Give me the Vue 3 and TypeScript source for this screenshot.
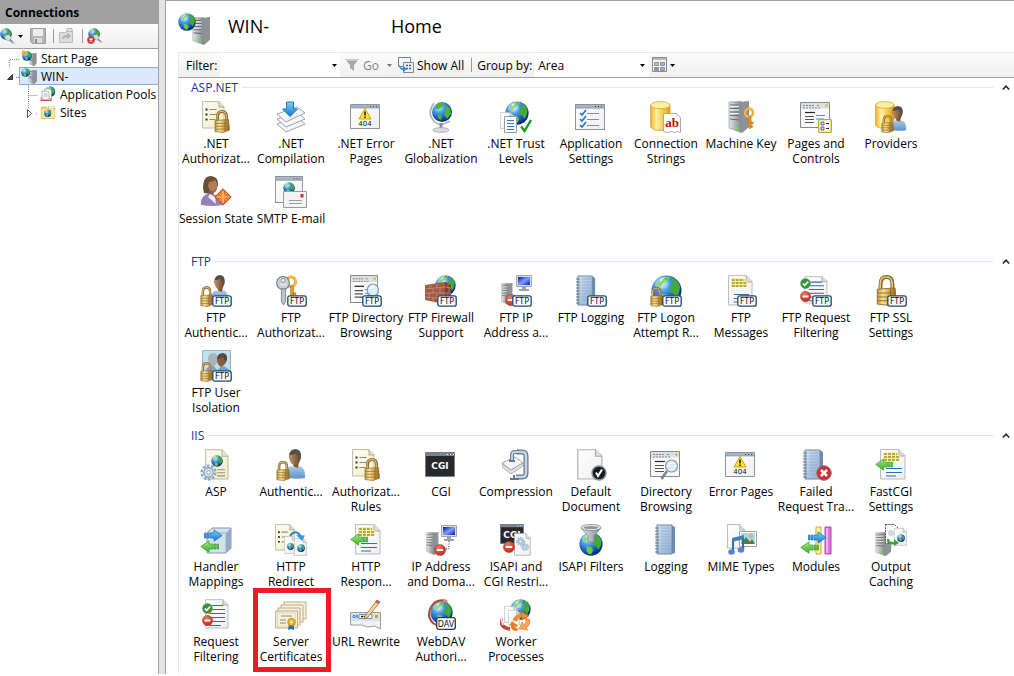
<script setup lang="ts">
import { h, ref } from 'vue'

// A part of an icon: symbol id, x, y, width, height on a 32 unit canvas
type Part = [string, number, number, number, number]
interface Feature { icon: string; lines: string[]; marked?: boolean }
interface Area { name: string; items: Feature[] }
interface Lettering { text: string; size: number; drop: number; fill: string; family: string; weight: number }

// Words that some parts carry, centred in the part; drop is the baseline's share of its height
const letterings: Record<string, Lettering> = {
  'p-ftp': { text: 'FTP', size: 8, drop: 0.76, fill: '#111', family: 'DejaVu Sans', weight: 400 },
  'p-dav': { text: 'DAV', size: 8, drop: 0.75, fill: '#111', family: 'DejaVu Sans', weight: 400 },
  'p-404': { text: '404', size: 7, drop: 0.95, fill: '#111', family: 'DejaVu Sans', weight: 400 },
  'p-cgi': { text: 'CGI', size: 9, drop: 0.68, fill: '#fff', family: 'DejaVu Sans', weight: 700 },
  'p-ab': { text: 'ab', size: 13, drop: 0.7, fill: '#b01616', family: 'Liberation Serif', weight: 700 },
}

const ftp: Part = ['p-ftp', 12, 20, 20, 12]

const icons: Record<string, Part[]> = {
  rules: [['p-rules', 2, 0, 24, 28], ['p-lock', 14, 9, 16, 23]],
  compile: [['p-stack', 1, 0, 30, 32]],
  error: [['p-window', 0, 3, 30, 25], ['p-404', 6, 6, 18, 20]],
  globalization: [['p-stand', 2, 0, 28, 32]],
  trust: [['p-globe', 5, 0, 24, 24], ['p-doc', 0, 11, 14, 17], ['p-bluedoc', 4, 15, 13, 17], ['p-tick', 20, 18, 12, 14]],
  settings: [['p-window', 0, 3, 30, 26], ['p-checks', 4, 8, 22, 19]],
  connection: [['p-db', 0, 0, 21, 30], ['p-ab', 13, 12, 18, 20]],
  machine: [['p-server', 3, 0, 22, 32], ['p-goldkey', 18, 6, 13, 23]],
  pages: [['p-browser', 0, 1, 30, 26], ['p-controls', 18, 18, 14, 14]],
  providers: [['p-db', 0, 0, 20, 28], ['p-user', 13, 5, 19, 25], ['p-lock', 6, 14, 13, 18]],
  session: [['p-purple', 0, 0, 24, 30], ['p-diamond', 14, 12, 18, 18]],
  smtp: [['p-window', 0, 0, 28, 27], ['p-globe', 8, 6, 12, 12], ['p-mail', 8, 15, 24, 17]],
  ftpAuth: [['p-user', 10, 0, 19, 27], ['p-lock', 0, 11, 13, 21], ftp],
  ftpRules: [['p-goldkey', 9, 0, 15, 27], ['p-key', 0, 1, 16, 30], ftp],
  ftpBrowse: [['p-browser', 0, 0, 28, 28], ['p-lens', 12, 8, 18, 21], ftp],
  ftpFirewall: [['p-globe', 10, 0, 21, 21], ['p-bricks', 0, 7, 26, 22], ftp],
  ftpIp: [['p-server', 1, 8, 12, 22], ['p-monitor', 16, 0, 16, 17], ['p-minus', 5, 19, 12, 12], ftp],
  ftpLog: [['p-book', 0, 0, 23, 31], ftp],
  ftpLogon: [['p-globe', 1, 0, 31, 31], ['p-lock', 0, 12, 13, 20], ftp],
  ftpMessages: [['p-message', 3, 0, 25, 31], ftp],
  ftpFilter: [['p-linedoc', 4, 1, 24, 28], ['p-ok', 0, 3, 11, 11], ['p-minus', 0, 16, 11, 11], ftp],
  ftpSsl: [['p-lock', 1, 0, 21, 31], ftp],
  ftpUser: [['p-frame', 2, 0, 29, 27], ['p-lock', 0, 12, 13, 20], ftp],
  asp: [['p-yellowdoc', 5, 0, 24, 31], ['p-globe', 11, 6, 12, 12], ['p-gear', 0, 15, 17, 17]],
  auth: [['p-user', 9, 0, 22, 30], ['p-lock', 1, 12, 14, 20]],
  cgi: [['p-cgi', 0, 3, 30, 25]],
  compression: [['p-clamp', 2, 0, 27, 32]],
  document: [['p-doc', 2, 0, 26, 31], ['p-blackok', 16, 16, 16, 16]],
  browse: [['p-browser', 0, 2, 30, 26], ['p-lens', 10, 10, 19, 21]],
  failed: [['p-book', 2, 0, 24, 31], ['p-redx', 16, 16, 16, 16]],
  fastcgi: [['p-message', 5, 0, 26, 31], ['p-left', 0, 9, 20, 13]],
  handler: [['p-cube', 6, 3, 26, 27], ['p-right', 2, 5, 21, 13], ['p-left', 0, 16, 21, 13]],
  redirect: [['p-rules', 0, 0, 21, 27], ['p-doc', 9, 12, 12, 18], ['p-doc', 19, 14, 13, 18], ['p-globe', 12, 19, 7, 7], ['p-globe', 22, 20, 8, 8], ['p-curve', 14, 7, 16, 10]],
  ip: [['p-server', 1, 8, 13, 23], ['p-monitor', 16, 1, 16, 17], ['p-minus', 9, 20, 12, 12], ['p-dots', 16, 17, 10, 10]],
  isapiCgi: [['p-cgi', 0, 0, 24, 20], ['p-doc', 14, 9, 17, 23], ['p-gear', 16, 13, 9, 9], ['p-gear', 21, 19, 8, 8], ['p-minus', 3, 17, 12, 12]],
  isapi: [['p-globe', 4, 8, 24, 24], ['p-funnel', 4, 0, 24, 19]],
  log: [['p-book', 4, 0, 24, 31]],
  mime: [['p-doc', 2, 0, 18, 25], ['p-picture', 14, 7, 18, 16], ['p-note', 3, 11, 17, 21]],
  modules: [['p-modules', 15, 2, 17, 29], ['p-right', 6, 7, 21, 13], ['p-left', 0, 17, 21, 13]],
  output: [['p-server', 0, 8, 17, 24], ['p-ghost', 10, 0, 14, 20], ['p-doc', 19, 4, 13, 18], ['p-globe', 22, 10, 8, 8], ['p-swoop', 12, 14, 12, 8]],
  filter: [['p-linedoc', 5, 0, 24, 30], ['p-ok', 2, 4, 11, 11], ['p-minus', 2, 16, 11, 11]],
  certificates: [['p-certs', 0, 2, 32, 29]],
  rewrite: [['p-rewrite', 0, 0, 32, 32]],
  webdav: [['p-globe', 5, 2, 23, 23], ['p-ring', 2, 0, 24, 30], ['p-dav', 11, 18, 20, 13]],
  worker: [['p-globe', 10, 0, 21, 21], ['p-doc', 4, 7, 14, 17], ['p-doc', 8, 11, 12, 15], ['p-cycle', 0, 12, 32, 20]],
  host: [['p-server', 14, 4, 19, 28], ['p-globe', 0, 0, 18, 18]],
  start: [['p-server', 16, 6, 16, 26], ['p-globe', 2, 2, 20, 20], ['p-star', 0, 0, 12, 12]],
  pools: [['p-globe', 9, 0, 22, 22], ['p-sheets', 1, 5, 24, 26]],
  sites: [['p-folder', 1, 3, 30, 27], ['p-globe', 8, 11, 15, 15]],
  connect: [['p-globe', 0, 0, 24, 24], ['p-plug', 9, 12, 22, 20]],
  disconnect: [['p-globe', 2, 0, 24, 24], ['p-plug', 12, 12, 20, 18], ['p-redx', 0, 16, 16, 16]],
}

const Glyph = (props: { name: string }) =>
  h('svg', { viewBox: '0 0 32 32', 'aria-hidden': 'true' }, icons[props.name].flatMap(([id, x, y, width, height]) => {
    const word = letterings[id]
    const shape = h('use', { href: '#' + id, x, y, width, height })
    if (!word) return [shape]
    return [shape, h('text', {
      x: x + width / 2, y: y + height * word.drop, fill: word.fill,
      'text-anchor': 'middle', 'font-family': word.family, 'font-size': word.size, 'font-weight': word.weight,
    }, word.text)]
  }))
Glyph.props = ['name']

const f = (icon: string, label: string, marked = false): Feature => ({ icon, lines: label.split('|'), marked })

const areas: Area[] = [
  {
    name: 'ASP.NET',
    items: [
      f('rules', '.NET|Authorizat...'), f('compile', '.NET|Compilation'), f('error', '.NET Error|Pages'),
      f('globalization', '.NET|Globalization'), f('trust', '.NET Trust|Levels'), f('settings', 'Application|Settings'),
      f('connection', 'Connection|Strings'), f('machine', 'Machine Key'), f('pages', 'Pages and|Controls'),
      f('providers', 'Providers'), f('session', 'Session State'), f('smtp', 'SMTP E-mail'),
    ],
  },
  {
    name: 'FTP',
    items: [
      f('ftpAuth', 'FTP|Authentic...'), f('ftpRules', 'FTP|Authorizat...'), f('ftpBrowse', 'FTP Directory|Browsing'),
      f('ftpFirewall', 'FTP Firewall|Support'), f('ftpIp', 'FTP IP|Address a...'), f('ftpLog', 'FTP Logging'),
      f('ftpLogon', 'FTP Logon|Attempt R...'), f('ftpMessages', 'FTP|Messages'), f('ftpFilter', 'FTP Request|Filtering'),
      f('ftpSsl', 'FTP SSL|Settings'), f('ftpUser', 'FTP User|Isolation'),
    ],
  },
  {
    name: 'IIS',
    items: [
      f('asp', 'ASP'), f('auth', 'Authentic...'), f('rules', 'Authorizat...|Rules'), f('cgi', 'CGI'),
      f('compression', 'Compression'), f('document', 'Default|Document'), f('browse', 'Directory|Browsing'),
      f('error', 'Error Pages'), f('failed', 'Failed|Request Tra...'), f('fastcgi', 'FastCGI|Settings'),
      f('handler', 'Handler|Mappings'), f('redirect', 'HTTP|Redirect'), f('fastcgi', 'HTTP|Respon...'),
      f('ip', 'IP Address|and Doma...'), f('isapiCgi', 'ISAPI and|CGI Restri...'), f('isapi', 'ISAPI Filters'),
      f('log', 'Logging'), f('mime', 'MIME Types'), f('modules', 'Modules'), f('output', 'Output|Caching'),
      f('filter', 'Request|Filtering'), f('certificates', 'Server|Certificates', true), f('rewrite', 'URL Rewrite'),
      f('webdav', 'WebDAV|Authori...'), f('worker', 'Worker|Processes'),
    ],
  },
]

const collapsed = ref<Record<string, boolean>>({})
const toggle = (name: string) => { collapsed.value[name] = !collapsed.value[name] }
const filterText = ref('')
const groupBy = ref('Area')
</script>

<template>
  <svg class="defs" aria-hidden="true">
    <defs>
      <radialGradient id="g-sea" cx=".35" cy=".28" r=".75"><stop offset="0" stop-color="#c4ecff" /><stop offset=".35" stop-color="#4b9bea" /><stop offset=".75" stop-color="#1450b8" /><stop offset="1" stop-color="#07246e" /></radialGradient>
      <linearGradient id="g-gold" x1="0" x2="1"><stop offset="0" stop-color="#c39a3f" /><stop offset=".3" stop-color="#f7e2a0" /><stop offset=".65" stop-color="#d0a248" /><stop offset="1" stop-color="#8c6424" /></linearGradient>
      <linearGradient id="g-db" x1="0" x2="1"><stop offset="0" stop-color="#f3b52c" /><stop offset=".3" stop-color="#fff0a4" /><stop offset=".7" stop-color="#f5c33d" /><stop offset="1" stop-color="#dd981d" /></linearGradient>
      <linearGradient id="g-steel" x1="0" x2="1"><stop offset="0" stop-color="#e3e6e8" /><stop offset=".5" stop-color="#b3b8bc" /><stop offset="1" stop-color="#83888c" /></linearGradient>
      <linearGradient id="g-page" x1="0" y1="0" x2="1" y2="1"><stop offset="0" stop-color="#fff" /><stop offset="1" stop-color="#efefef" /></linearGradient>
      <linearGradient id="g-cream" x1="0" y1="0" x2="1" y2="1"><stop offset="0" stop-color="#fffef2" /><stop offset="1" stop-color="#f3ebc4" /></linearGradient>
      <linearGradient id="g-body" x1="0" y1="0" x2="0" y2="1"><stop offset="0" stop-color="#a8cbea" /><stop offset="1" stop-color="#5f94c6" /></linearGradient>
      <linearGradient id="g-book" x1="0" x2="1" y2="1"><stop offset="0" stop-color="#d0e0f2" /><stop offset="1" stop-color="#8fadd0" /></linearGradient>
      <linearGradient id="g-blue" x1="0" y1="0" x2="0" y2="1"><stop offset="0" stop-color="#7fd1ff" /><stop offset="1" stop-color="#1478cc" /></linearGradient>
      <linearGradient id="g-green" x1="0" y1="0" x2="0" y2="1"><stop offset="0" stop-color="#a4ea80" /><stop offset="1" stop-color="#39b02a" /></linearGradient>
      <linearGradient id="g-screen" x1="0" y1="0" x2="1" y2="1"><stop offset="0" stop-color="#0614a0" /><stop offset=".5" stop-color="#7fa0f4" /><stop offset="1" stop-color="#0a1cb4" /></linearGradient>
      <linearGradient id="g-skin" x1="0" x2="1"><stop offset="0" stop-color="#c4946a" /><stop offset="1" stop-color="#6d452a" /></linearGradient>
      <radialGradient id="g-red" cx=".4" cy=".3" r=".8"><stop offset="0" stop-color="#ee7a66" /><stop offset="1" stop-color="#bb1e10" /></radialGradient>
    </defs>
    <symbol id="p-globe" viewBox="0 0 32 32">
      <circle cx="16" cy="16" r="15.5" fill="url(#g-sea)" />
      <path d="M13 2l7 0-2 4-5 2-4 5-4-1q2-7 8-10z" fill="#6cc552" /><path d="M21 3q7 2 9 9l-1 6-3 6-3-5-4-2 1-6 4-1-3-3z" fill="#44ab32" /><path d="M10 19l6 1 3 4-3 6q-5-1-6-5z" fill="#6ec944" /><path d="M9 4q3-2 6-2l-3 3-3 3z" fill="#d4f3b6" /><ellipse cx="11" cy="9" rx="7" ry="5" fill="#fff" opacity=".25" />
    </symbol>
    <symbol id="p-lock" viewBox="0 0 16 24" preserveAspectRatio="none">
      <path d="M3.5 13V7q0-5.500 4.500-5.500T12.500 7v6" fill="none" stroke="#8e6d2c" stroke-width="3" /><path d="M3.200 12V7q0-5.500 4.500-5.500T12.300 7v4" fill="none" stroke="#e9d28d" stroke-width="1" />
      <path d="M1 11l13.500-1 1 11L9 23.500 1 22.500z" fill="url(#g-gold)" stroke="#8d6828" stroke-width=".7" /><path d="M1 14h13M1 17h14M1 20h14" stroke="#9b7027" stroke-width=".8" /><path d="M11 10.500v12.500" stroke="#80591d" stroke-width=".6" />
    </symbol>
    <symbol id="p-doc" viewBox="0 0 24 30" preserveAspectRatio="none"><path d="M.7.7H17l6 6V29H.7z" fill="url(#g-page)" stroke="#aeb0b2" stroke-width="1.100" /><path d="M17 .7V7h6" fill="#dedede" stroke="#a4a6a8" /></symbol>
    <symbol id="p-yellowdoc" viewBox="0 0 24 30" preserveAspectRatio="none"><path d="M.7.7H17l6 6V29H.7z" fill="url(#g-cream)" stroke="#bdb9a4" /><path d="M17 .7V7h6" fill="#ece6cb" stroke="#b3af9b" /><path d="M12 20h8M12 23h8M12 26h8" stroke="#969382" /></symbol>
    <symbol id="p-rules" viewBox="0 0 24 28" preserveAspectRatio="none"><path d="M.6.6H17l5 5V27H.6z" fill="url(#g-cream)" stroke="#c0bba5" /><path d="M17 .6V6h5" fill="#e8e3ce" stroke="#aaa797" /><path d="M3.500 8.500h2M3.500 13.500h2M3.500 18.500h2" stroke="#2c3550" stroke-width="2" /><path d="M7.500 8.500h7M7.500 13.500h7M7.500 18.500h6" stroke="#888b94" stroke-width="1.200" /></symbol>
    <symbol id="p-bluedoc" viewBox="0 0 13 17"><path d="M.5.500h12v16H.5z" fill="#fff" stroke="#919da9" /><path d="M3 4.500h7M3 7.500h7M3 10.500h7M3 13.500h7" stroke="#3777ba" /></symbol>
    <symbol id="p-linedoc" viewBox="0 0 24 30" preserveAspectRatio="none"><path d="M.7.7H18l5 5V29H.7z" fill="url(#g-page)" stroke="#b7bdc5" /><path d="M18 .7V6h5" fill="#ddd" stroke="#aaa" /><path d="M5 6.500h13M5 10.500h15M5 14.500h15M5 18.500h15M5 22.500h15M5 26.500h11" stroke="#286db2" stroke-width="1.200" /></symbol>
    <symbol id="p-message" viewBox="0 0 26 31" preserveAspectRatio="none"><path d="M.6.6H19l6 6V30H.6z" fill="url(#g-page)" stroke="#b6babd" /><path d="M19 .6V7h6" fill="#ddd" stroke="#aaa" /><path d="M3 3h15v3h2v6H3z" fill="#fff391" /><path d="M4 5h13M4 8h15M4 11h15" stroke="#655c23" stroke-width="1.200" stroke-dasharray="3 1" /><path d="M6 19.500h16M6 23.500h16M6 27h10" stroke="#2970ba" stroke-width="1.200" /></symbol>
    <symbol id="p-stack" viewBox="0 0 30 32"><g fill="#f5f6f7" stroke="#94989c" stroke-width=".9"><path d="M1 23l20-7 8 7-19 8z" /><path d="M1 18l20-7 8 7-19 8z" /><path d="M1 13l20-7 8 6-19 9z" /></g><path d="M10.500 1h7v7h4L14 15.500 6.500 8h4z" fill="url(#g-blue)" stroke="#1b77b8" /></symbol>
    <symbol id="p-window" viewBox="0 0 30 25" preserveAspectRatio="none"><path d="M.5.500h29v24H.5z" fill="url(#g-page)" stroke="#8b939c" /><path d="M1 1h28v3H1z" fill="#a6b3c2" /><path d="M20 2.500h1m2 0h1m2 0h1" stroke="#30455f" /><path d="M1 4h28" stroke="#7f8b98" stroke-width=".6" /></symbol>
    <symbol id="p-404" viewBox="0 0 18 20"><path d="M9 1.500L15 12H3z" fill="#ffe13d" stroke="#d5a300" stroke-linejoin="round" /><path d="M9 4.500v4M9 9.500v1.500" stroke="#222" stroke-width="1.600" /></symbol>
    <symbol id="p-stand" viewBox="0 0 28 32"><path d="M7 2Q0 11 6 19t17 1" fill="none" stroke="#b3b7bb" stroke-width="1.800" /><path d="M14 22v6" stroke="#8f9397" stroke-width="3" /><ellipse cx="14" cy="29" rx="8" ry="2.400" fill="#d8dadc" stroke="#919599" stroke-width=".6" /><circle cx="15" cy="11" r="10" fill="url(#g-sea)" /><path d="M9 4q4-4 8-2l-1 3-4 3-4 0zM18 4l5 3 1 6-4 5-3-5 2-3zM11 13l4 1-1 5-3-2z" fill="#4db536" /></symbol>
    <symbol id="p-tick" viewBox="0 0 12 14"><path d="M1.200 7.500L4.500 12 11 1" fill="none" stroke="#1c9a20" stroke-width="2.400" /></symbol>
    <symbol id="p-checks" viewBox="0 0 22 19"><path d="M1 4l2 2 4-5M1 10l2 2 4-5M1 16l2 2 4-5" fill="none" stroke="#2774bd" stroke-width="1.600" /><path d="M8 4.500h12M8 10.500h12M8 16.500h12" stroke="#858d96" stroke-width="1.200" /></symbol>
    <symbol id="p-db" viewBox="0 0 21 30" preserveAspectRatio="none"><path d="M.7 4v22q2 3.400 9.500 3.400T20 26V4z" fill="url(#g-db)" stroke="#d69b27" stroke-width=".8" /><ellipse cx="10.400" cy="4.200" rx="9.700" ry="3.600" fill="#fff0a6" stroke="#d3a338" stroke-width=".8" /></symbol>
    <symbol id="p-ab" viewBox="0 0 18 20"><path d="M.5.500h13l4 4v15l-3-1-3 1-3-1-4 1-4-1z" fill="#fff" stroke="#aaa" /></symbol>
    <symbol id="p-server" viewBox="0 0 22 32" preserveAspectRatio="none"><path d="M11 1l10-1v26l-7 6-3-2z" fill="#8d9296" /><path d="M1 1l12-.5v31L1 27z" fill="url(#g-steel)" stroke="#8c9195" stroke-width=".6" /><path d="M2 4h9M2 7.500h9M2 11h9M2 14.500h9M2 18l9 1" stroke="#666d72" stroke-width="1.200" /><path d="M2 5.400h9M2 9h9M2 12.600h9" stroke="#f7f8f9" stroke-width=".9" /><circle cx="9" cy="27" r="1.500" fill="#5be327" /></symbol>
    <symbol id="p-goldkey" viewBox="0 0 15 26" preserveAspectRatio="none"><circle cx="7" cy="6.500" r="4.600" fill="none" stroke="#eaa121" stroke-width="3" /><circle cx="7" cy="6.500" r="5" fill="none" stroke="#ffe093" stroke-width=".7" /><path d="M6.500 11h3v12l-1.500 2-1.500-2zM9 17h3v2H9zM9 21h2v2H9z" fill="#e49a1d" stroke="#a96b11" stroke-width=".5" /></symbol>
    <symbol id="p-key" viewBox="0 0 15 28" preserveAspectRatio="none"><circle cx="7.500" cy="6.500" r="6" fill="#cbd0d5" stroke="#6f7780" /><circle cx="7.500" cy="4" r="1.700" fill="#fff" stroke="#727a82" stroke-width=".7" /><path d="M6 12h4v12l-2 3-2-3z" fill="#bcc2c9" stroke="#68727c" stroke-width=".7" /><path d="M5 8h6" stroke="#e9edf0" stroke-width="1.200" /></symbol>
    <symbol id="p-browser" viewBox="0 0 30 26" preserveAspectRatio="none"><path d="M.5.500h29v25H.5z" fill="#fafafa" stroke="#83898f" /><path d="M1 1h28v5.500H1z" fill="#dddfe1" /><path d="M3 3.500h11M17 3.500h3M3 6h17" stroke="#84898e" stroke-dasharray="2 1" /><circle cx="26.500" cy="3.500" r="1.300" fill="#dcb832" /><path d="M5 10.500h10" stroke="#282828" stroke-width="1.200" /><path d="M5 14.500h9M5 17.500h9M5 20.500h9" stroke="#555" stroke-width="1.100" /><path d="M16 13.500h9M16 17h8" stroke="#508bd1" /></symbol>
    <symbol id="p-controls" viewBox="0 0 14 14"><rect x=".7" y=".7" width="12.600" height="12.600" rx="1" fill="#fffef2" stroke="#c1a520" stroke-width="1.300" /><path d="M3 3h3v3H3zM3 8h3v3H3z" fill="#dcd4f0" stroke="#4d4191" stroke-width=".8" /><path d="M8 4.500h3M8 9.500h3" stroke="#292929" /></symbol>
    <symbol id="p-user" viewBox="0 0 22 30" preserveAspectRatio="none"><path d="M1 28q-1-8 6-11l5 2 4-2q6 3 5 12-10 2-20-1z" fill="url(#g-body)" /><path d="M8 13h7l-1 6-4-1z" fill="#7d553b" /><path d="M5 8q0-8 7-8 6 1 5 9l-2 5-8-2z" fill="#54504c" /><path d="M5 6q5 0 7-2 1 4 4 5l-2 5-4 2q-5-2-5-10z" fill="url(#g-skin)" /></symbol>
    <symbol id="p-purple" viewBox="0 0 24 30"><path d="M1 29q-1-9 8-12l4 1 7 3q3 4 2 8-8 2-21 0z" fill="#9580bd" /><path d="M10 18l5 3 1 7-8-7z" fill="#eeeaf5" /><path d="M3 12Q3 0 11 0q8 1 7 9l-2 6-4 3-8-1z" fill="#6b5038" /><path d="M9 6q4 0 6-2 3 3 2 8l-3 4-4-1-2-5z" fill="#b07d55" /><path d="M10 14l4 2-1 3-4-2z" fill="#8b6044" /></symbol>
    <symbol id="p-diamond" viewBox="0 0 18 18"><path d="M9 .8L17.200 9 9 17.200.8 9z" fill="#ee7426" stroke="#b94a10" /><path d="M9 3v12M3 9h12" stroke="#ffd2a6" stroke-width="1.200" /><path d="M5.500 5.500l7 7M12.500 5.500l-7 7" stroke="#fbb27c" stroke-width=".7" /></symbol>
    <symbol id="p-mail" viewBox="0 0 24 17"><path d="M.5.500h23v16H.5z" fill="#f3f3f4" stroke="#989c9f" /><path d="M17.500 3h3v3.500h-3z" fill="#df2e21" /><path d="M6 9.500h13M6 12.500h13" stroke="#9b9da0" /></symbol>
    <symbol id="p-ftp" viewBox="0 0 20 12"><rect x=".8" y=".8" width="18.400" height="10.400" rx="2" fill="#fafbfc" stroke="#1d496f" stroke-width="1.300" /></symbol>
    <symbol id="p-lens" viewBox="0 0 19 21" preserveAspectRatio="none"><path d="M7 12l-5.500 8" stroke="#84898f" stroke-width="2.800" /><circle cx="11.500" cy="7" r="6" fill="#d9efff" fill-opacity=".9" stroke="#8799aa" stroke-width="1.200" /><path d="M8 7q1-3 4-3" stroke="#fff" stroke-width="1.500" fill="none" /></symbol>
    <symbol id="p-bricks" viewBox="0 0 26 22" preserveAspectRatio="none"><path d="M0 3l20-3 6 3v16l-7 3L0 18z" fill="#a35a44" /><path d="M20 0l6 3v16l-6 3z" fill="#7b3d2c" /><path d="M0 7l20-2 6 1M0 11l20 0 6 0M0 15l20 2 6-2M5 3v4M12 2v4M8 7v4M15 6v5M4 11v4M12 12v5M8 16v4M15 17v4M23 2v3M24 6v4M23 11v4" stroke="#cf9a86" stroke-width=".7" fill="none" /></symbol>
    <symbol id="p-monitor" viewBox="0 0 16 17"><path d="M.5.500h15v11H.5z" fill="#dadde0" stroke="#a2a6aa" /><path d="M2 2h12v8H2z" fill="url(#g-screen)" /><path d="M6 12h4v2h3v2H3v-2h3z" fill="#9ca1a6" /></symbol>
    <symbol id="p-minus" viewBox="0 0 12 12"><circle cx="6" cy="6" r="5.600" fill="url(#g-red)" stroke="#b43d2d" stroke-width=".5" /><path d="M2.700 6h6.600" stroke="#fff" stroke-width="2" /></symbol>
    <symbol id="p-ok" viewBox="0 0 12 12"><circle cx="6" cy="6" r="5.600" fill="#37923e" stroke="#8fc795" stroke-width=".6" /><path d="M3 6l2 2 4-4" fill="none" stroke="#fff" stroke-width="1.700" /></symbol>
    <symbol id="p-blackok" viewBox="0 0 16 16"><circle cx="8" cy="8" r="7" fill="#181a1b" stroke="#8d9193" stroke-width="1.500" /><path d="M5 7.500L7 11l4-6.500" fill="none" stroke="#fff" stroke-width="2" /></symbol>
    <symbol id="p-redx" viewBox="0 0 16 16"><circle cx="8" cy="8" r="7.300" fill="#ce3032" stroke="#a86d6d" /><path d="M5 5l6 6M11 5l-6 6" stroke="#fff" stroke-width="2.500" /></symbol>
    <symbol id="p-book" viewBox="0 0 24 31" preserveAspectRatio="none"><path d="M3 1h14l4 2v26l-4 1H3z" fill="#6c8aae" /><path d="M3 1h15v29H3z" fill="url(#g-book)" stroke="#6c88a8" /><path d="M7 4h9M7 7h9M7 10h9M7 13h9M7 16h9M7 19h9M7 22h9M7 25h9" stroke="#86a3c6" stroke-width=".6" /><path d="M1 4h4M1 7h4M1 10h4M1 13h4M1 16h4M1 19h4M1 22h4M1 25h4M1 28h4" stroke="#66727e" stroke-width="1.200" /></symbol>
    <symbol id="p-frame" viewBox="0 0 29 27"><path d="M.5.500h28v25H.5z" fill="#c3dfea" stroke="#8cb7c9" /><path d="M3 25q0-9 8-10l4 5v6zM14 26q0-8 7-10 8 2 7 10z" fill="#75a5cf" /><path d="M6 9q0-6 5-6t5 6q-1 7-5 7t-5-7z" fill="#a9b5bb" /><path d="M15 9q0-6 6-6 5 1 4 7l-2 4-6-1z" fill="#4f4c49" /><path d="M15 9q4 0 6-2 1 3 3 4l-2 4-3 2q-4-2-4-8z" fill="#8a5d40" /></symbol>
    <symbol id="p-gear" viewBox="0 0 18 18"><circle cx="9" cy="9" r="7.300" fill="none" stroke="#8ba8c7" stroke-width="2.500" stroke-dasharray="3 1.600" /><circle cx="9" cy="9" r="5" fill="#d8e5f1" stroke="#7d9cbd" stroke-width="1.400" /><circle cx="9" cy="9" r="2" fill="#fff" stroke="#829ebb" /></symbol>
    <symbol id="p-cgi" viewBox="0 0 30 25" preserveAspectRatio="none"><path d="M.5.500h29v24H.5z" fill="#27292b" stroke="#777d82" /><path d="M1 1h28v3H1z" fill="#778696" /><path d="M22 2.500h1m2 0h1m2 0h1" stroke="#fff" /></symbol>
    <symbol id="p-clamp" viewBox="0 0 27 32"><path d="M15 3h5q4 0 4 4v17q0 4-4 4h-6" fill="none" stroke="#60758c" stroke-width="5" /><path d="M15 3h5q4 0 4 4v17q0 4-4 4h-6" fill="none" stroke="#c6d5e3" stroke-width="2.600" /><path d="M0 14l13-6 8 6-12 7z" fill="#f4f5f6" stroke="#888" stroke-width=".8" /><path d="M0 15v3l9 7 12-8v-3l-12 7z" fill="#dfe1e3" stroke="#999" stroke-width=".7" /><path d="M10 12V6q0-3 4-3h3" fill="none" stroke="#60758c" stroke-width="4" /><path d="M10 12V6q0-3 4-3h3" fill="none" stroke="#c6d5e3" stroke-width="2" /><path d="M7 12h6M8 30h9M12 26v4" stroke="#63788d" stroke-width="2" /></symbol>
    <symbol id="p-left" viewBox="0 0 21 13" preserveAspectRatio="none"><path d="M.8 6.500L9 .8V4h4v5H9v3.200zM14 4h2v5h-2zM17 4h1.500v5H17z" fill="url(#g-green)" stroke="#309c25" stroke-width=".7" /></symbol>
    <symbol id="p-right" viewBox="0 0 21 13" preserveAspectRatio="none"><path d="M20.200 6.500L12 .8V4H8v5h4v3.200zM5 4h2v5H5zM2.500 4H4v5H2.500z" fill="url(#g-blue)" stroke="#1675b9" stroke-width=".7" /></symbol>
    <symbol id="p-cube" viewBox="0 0 26 27"><path d="M1 6l5-5h19v20l-5 5H1z" fill="#d4e1ee" stroke="#8199b3" /><path d="M20 6v20l5-5V1z" fill="#93abc6" /><path d="M1 6h19v20" fill="none" stroke="#9cb0c6" /></symbol>
    <symbol id="p-curve" viewBox="0 0 16 10"><path d="M1 5q6-8 11 1" fill="none" stroke="#2680cc" stroke-width="2" /><path d="M7 4l9 .5L13 10z" fill="#399ae0" /></symbol>
    <symbol id="p-swoop" viewBox="0 0 12 8"><path d="M1 1q0 5 6 4" fill="none" stroke="#3aa536" stroke-width="2.500" /><path d="M7 1l5 4-5 3z" fill="#36a332" /></symbol>
    <symbol id="p-dots" viewBox="0 0 10 10"><path d="M8 0v8H1" fill="none" stroke="#222" stroke-dasharray="1 1.500" /></symbol>
    <symbol id="p-funnel" viewBox="0 0 24 19"><path d="M2 4l7 8v6h6v-6l7-8z" fill="url(#g-steel)" stroke="#7b848b" stroke-width=".7" /><ellipse cx="12" cy="3.500" rx="10" ry="3" fill="#e9edf0" stroke="#7b848b" stroke-width=".8" /><ellipse cx="12" cy="3.600" rx="7.500" ry="1.500" fill="#8b969d" /></symbol>
    <symbol id="p-picture" viewBox="0 0 18 16"><path d="M.5.500h17v15H.5z" fill="#fff" stroke="#9da3a7" /><path d="M2 2h14v11H2z" fill="#a9d6f5" /><path d="M2 13l5-7 4 5 2-3 3 5z" fill="#398b40" /><circle cx="12" cy="5" r="2" fill="#e5b34f" /><path d="M10 10l3 3H8z" fill="#bd4839" /></symbol>
    <symbol id="p-note" viewBox="0 0 17 21"><path d="M5 4v12M15 2v12" stroke="#376aa9" stroke-width="2" /><path d="M4 3l12-3v4L4 7z" fill="#427dbe" /><ellipse cx="3.500" cy="17" rx="3.300" ry="2.800" fill="#4f88c7" /><ellipse cx="13" cy="15" rx="3.300" ry="2.800" fill="#4f88c7" /></symbol>
    <symbol id="p-modules" viewBox="0 0 17 29" preserveAspectRatio="none"><path d="M1 1h5v27H1z" fill="#fff0a0" stroke="#c9a92e" /><path d="M10 1h6v27h-6z" fill="#db78d7" stroke="#ab48a7" /><path d="M12 2v25" stroke="#f7c6f4" stroke-width="1.500" /></symbol>
    <symbol id="p-ghost" viewBox="0 0 14 20"><path d="M.5.500h9l4 4v15H.5z" fill="#fafafa" stroke="#555" stroke-dasharray="2 1" /><circle cx="6" cy="9" r="3" fill="#c3ded9" /></symbol>
    <symbol id="p-sheets" viewBox="0 0 24 26"><path d="M8 1h11l3 3v16H8z" fill="#fff" stroke="#8d979f" stroke-width="1.300" /><path d="M3 5h11l3 3v14H3z" fill="#f7f8f9" stroke="#8d979f" stroke-width="1.300" /><path d="M6 11h8M6 15h8" stroke="#8a949c" stroke-width="1.300" /><path d="M1 18v6h20v-4" fill="none" stroke="#c8493c" stroke-width="2.400" /></symbol>
    <symbol id="p-certs" viewBox="0 0 32 29"><g fill="#f7f1df" stroke="#bda984" stroke-width="1"><path d="M9 1h22v17H9z" /><path d="M6 4h22v17H6z" /><path d="M3 7h22v17H3z" /><path d="M.6 10h22v17H.6z" /></g><path d="M2.500 12h18v13h-18z" fill="none" stroke="#d3bf98" stroke-width=".8" stroke-dasharray="1 .7" /><path d="M6 15h11M5 19h6M5 22h6" stroke="#968b79" /><path d="M14 23l-1 6 3-1 3 1v-6z" fill="#2b6abc" /><circle cx="16.500" cy="21" r="3.800" fill="#edb22f" stroke="#b98119" stroke-width=".7" /><circle cx="16.500" cy="21" r="1.500" fill="#ffe796" /></symbol>
    <symbol id="p-rewrite" viewBox="0 0 32 32"><path d="M.5 13.500h30V30l-6-3-7 1-6-2H.5z" fill="#f0f1f2" stroke="#999ea3" /><path d="M1 14h29v8H1z" fill="#d9e1e9" /><path d="M9 15.500h13v4H9z" fill="#fff" stroke="#687684" stroke-width=".8" /><path d="M11 17.500h8" stroke="#111" stroke-width="1.300" stroke-dasharray="2 .6" /><circle cx="4" cy="17.500" r="1.200" fill="none" stroke="#337bc5" /><circle cx="7" cy="17.500" r="1" fill="none" stroke="#337bc5" /><path d="M25 16h3v3h-3z" fill="#d8a323" /><path d="M15 17L27 1l3 2-12 15-4 2z" fill="#f6d68e" stroke="#84704d" stroke-width=".8" /><path d="M27 1l3 2-2 2-3-2z" fill="#cf5b53" /></symbol>
    <symbol id="p-ring" viewBox="0 0 24 30" preserveAspectRatio="none"><path d="M20 2Q9-1 4 8t2 16l5 3" fill="none" stroke="#b3463c" stroke-width="2" /><path d="M21 4L16 0" stroke="#df8a80" stroke-width="2" /></symbol>
    <symbol id="p-dav" viewBox="0 0 20 13"><rect x=".7" y=".7" width="18.600" height="11.600" rx="2" fill="#fff" stroke="#253e58" stroke-width="1.300" /></symbol>
    <symbol id="p-cycle" viewBox="0 0 32 20"><path d="M1 7q-1 10 9 11" fill="none" stroke="#ca4338" stroke-width="3.500" /><path d="M1 7l2 7" stroke="#f2ded9" stroke-width="2" /><path d="M13 9q2-6 9-6l-1-3 8 5-7 4v-3q-4 0-5 4z" fill="#f18a31" stroke="#cc6518" stroke-width=".5" /><path d="M25 6l5 3q0 6-4 8l2 2-9-1 3-7 2 3q3-3 1-8z" fill="#f7a557" stroke="#cf6c1f" stroke-width=".5" /><path d="M12 10l6 5-3 1 4 3-4 1q-5-2-4-6l-2 1z" fill="#ee7a22" /></symbol>
    <symbol id="p-star" viewBox="0 0 12 12"><path d="M6 0l1.500 4L12 3 9 6l3 4-5-2-3 4V8L0 7l4-2-2-4 3 2z" fill="#f2a62a" stroke="#f2a62a" /></symbol>
    <symbol id="p-folder" viewBox="0 0 30 27"><path d="M1 3h11l3 3h14v20H1z" fill="#f3d574" stroke="#c59d38" /><path d="M16 1h11v6H16z" fill="#fff9dd" stroke="#c6a44c" /><path d="M2 8h26v17H2z" fill="#fae8a0" /></symbol>
    <symbol id="p-plug" viewBox="0 0 22 20"><path d="M8 9l10 9" stroke="#85909a" stroke-width="4" /><path d="M1 3l8-2 5 7-6 6-7-4z" fill="#d3dde5" stroke="#81909b" /><path d="M16 15l5 4" stroke="#c1cbd4" stroke-width="3" /></symbol>
  </svg>

  <div class="manager">
    <aside class="connections">
      <h2 class="pane-title">Connections</h2>
      <div class="pane-tools">
        <button class="tool" aria-label="Connect"><Glyph class="small" name="connect" /></button>
        <button class="tool caret" aria-label="Connect options"><svg viewBox="0 0 5 3"><path d="M0 0h5L2.500 3z" /></svg></button>
        <button class="tool save" aria-label="Save" disabled><svg class="small" viewBox="0 0 16 16"><path d="M.5.500h15v15h-13l-2-2z" fill="#b5b5b5" stroke="#9c9c9c" /><path d="M3 1h10v7H3z" fill="#ededed" /><path d="M4 10h8v5H4z" fill="#ddd" /><path d="M5 11h2v4H5z" fill="#888" /></svg></button>
        <span class="bar"></span>
        <button class="tool" aria-label="Up" disabled><svg class="small" viewBox="0 0 16 16"><path d="M.5 4.500h6l2-2h5v12H.5z" fill="#dcdcdc" stroke="#bbb" /><path d="M3 12q0-5 5-5V5l4 3-4 3V9q-3 0-5 3z" fill="#b0b0b0" /><path d="M8 .5h5v3H8z" fill="#e5e5e5" stroke="#bbb" /></svg></button>
        <span class="bar second"></span>
        <button class="tool" aria-label="Disconnect"><Glyph class="small" name="disconnect" /></button>
      </div>
      <ul class="tree">
        <li>
          <button class="node"><svg class="guide" viewBox="0 0 19 18"><path d="M9.500 18V10.500H19" /></svg><span class="node-body"><Glyph class="small" name="start" />Start Page</span></button>
        </li>
        <li>
          <button class="node" aria-expanded="true"><svg class="guide" viewBox="0 0 19 18"><path d="M16 10.500h3" /><path class="open" d="M7.500 12.500h5v-5z" /></svg><span class="node-body selected"><Glyph class="small" name="host" />WIN-</span></button>
          <ul>
            <li><button class="node"><svg class="guide deep" viewBox="0 0 38 18"><path d="M28.500 0V18M28.500 10.500H38" /></svg><span class="node-body"><Glyph class="small" name="pools" />Application Pools</span></button></li>
            <li><button class="node" aria-expanded="false"><svg class="guide deep" viewBox="0 0 38 18"><path d="M28.500 0V5M36 10.500h2" /><path class="shut" d="M27.500 6.500v8l4-4z" /></svg><span class="node-body"><Glyph class="small" name="sites" />Sites</span></button></li>
          </ul>
        </li>
      </ul>
    </aside>

    <div class="splitter"></div>

    <main class="home">
      <header class="heading">
        <Glyph class="large" name="host" />
        <h1><span class="machine">WIN-</span><span>Home</span></h1>
      </header>
      <div class="filterbar">
        <label class="filter-label" for="filter">Filter:</label>
        <span class="combo filter-box"><input id="filter" v-model="filterText" type="text" /><button class="tool caret" aria-label="Recent filters"><svg viewBox="0 0 5 3"><path d="M0 0h5L2.500 3z" /></svg></button></span>
        <button class="tool go" disabled><svg class="go-icon" viewBox="0 0 14 14"><path d="M0 1h14L9 7v6l-4-3V7z" fill="#a9a9a9" /><path d="M1 1h12v2H1z" fill="#c8c8c8" /></svg>Go</button>
        <button class="tool caret faded" aria-label="Go options" disabled><svg viewBox="0 0 5 3"><path d="M0 0h5L2.500 3z" /></svg></button>
        <button class="tool show"><svg class="small" viewBox="0 0 16 16"><path d="M.5.500h12v9H.5z" fill="#f4f7f9" stroke="#75828e" /><path d="M5.500 5.500h10v10h-10z" fill="#eef3f7" stroke="#7d8a96" /><path d="M8 8.500h2m1 0h2M8 11.500h2m1 0h2" stroke="#3a5f9d" stroke-width="1.500" /><path d="M1 7q1 4 4 4V8.500l4 3.500-4 3.500V13q-4 0-4-6z" fill="#2e94d8" /></svg>Show All</button>
        <span class="bar group-bar"></span>
        <label class="group-label" for="group">Group by:</label>
        <span class="combo group-box"><select id="group" v-model="groupBy"><option>Area</option><option>Category</option><option>No Grouping</option></select><svg class="arrow" viewBox="0 0 5 3"><path d="M0 0h5L2.500 3z" /></svg></span>
        <button class="tool view" aria-label="View"><svg class="small" viewBox="0 0 16 16"><path d="M.5.500h14v14H.5z" fill="#f7f7f7" stroke="#858c94" /><path d="M1 2h13" stroke="#b3bcc5" stroke-width="2" /><path d="M2.500 5.500h4v3h-4z" fill="#b9cf7e" stroke="#8d949b" /><path d="M8.500 5.500h4v3h-4z" fill="#8dbbe0" stroke="#8d949b" /><path d="M2.500 10.500h4v3h-4z" fill="#958cd0" stroke="#8d949b" /><path d="M8.500 10.500h4v3h-4z" fill="#e29a7a" stroke="#8d949b" /></svg></button>
        <button class="tool caret view-caret" aria-label="View options"><svg viewBox="0 0 5 3"><path d="M0 0h5L2.500 3z" /></svg></button>
      </div>

      <div class="areas">
        <section v-for="area in areas" :key="area.name" class="area">
          <header class="area-head">
            <h2>{{ area.name }}</h2><span class="rule"></span>
            <button class="tool fold" :aria-label="'Toggle ' + area.name" @click="toggle(area.name)"><svg viewBox="0 0 8 5"><path d="M.8 4.500L4 1.200l3.200 3.300" /></svg></button>
          </header>
          <ul v-if="!collapsed[area.name]" class="features">
            <li v-for="item in area.items" :key="item.lines.join(' ')" :class="{ marked: item.marked }">
              <button class="feature">
                <Glyph class="large" :name="item.icon" />
                <span class="caption"><span v-for="line in item.lines" :key="line">{{ line }}</span></span>
              </button>
            </li>
          </ul>
        </section>
      </div>
    </main>
  </div>
</template>

<style>
body { margin: 0; background: #fff; }
</style>

<style scoped>
.defs { position: absolute; width: 0; height: 0; }
.manager { display: flex; box-sizing: border-box; min-height: 100vh; padding-bottom: 2px; font: 12px/15px "Open Sans", "Noto Sans", sans-serif; color: #000; }
h1, h2, ul { margin: 0; padding: 0; font-size: inherit; font-weight: 400; list-style: none; }
button, input, select { margin: 0; padding: 0; border: 0; background: none; font: inherit; color: inherit; }
svg { display: block; flex: none; }
.small { width: 16px; height: 16px; }
.large { width: 32px; height: 32px; }
.tool { display: flex; align-items: center; }
.caret { justify-content: center; width: 12px; height: 20px; }
.caret svg { width: 5px; height: 3px; }
.faded { fill: #777; }
.bar { width: 1px; height: 14px; background: #999; }

.connections { flex: none; width: 158px; border-right: 1px solid #a0a0a0; }
.pane-title { height: 24px; padding-left: 5px; background: #a0a0a0; font-weight: 700; line-height: 25px; }
.pane-tools { display: flex; align-items: center; height: 24px; border-bottom: 1px solid #a0a0a0; background: linear-gradient(#fdfdfd, #eee); }
.pane-tools .caret { width: 8px; }
.save { margin: 0 7px 0 6px; }
.pane-tools .bar { margin-right: 5px; }
.pane-tools .bar.second { margin: 0 4px 0 7px; }
.node { display: flex; width: 100%; height: 18px; text-align: left; white-space: nowrap; }
.guide { width: 19px; height: 18px; fill: none; stroke: #888; stroke-dasharray: 1 1; }
.deep { width: 38px; }
.open { fill: #555; stroke: #333; stroke-dasharray: none; }
.shut { fill: #fff; stroke: #555; stroke-dasharray: none; }
.node-body { display: flex; flex: 1; align-items: center; gap: 4px; box-sizing: border-box; height: 18px; padding-left: 1px; border: 1px solid transparent; border-right: 0; }
.selected { border-color: #84acdd; background: #dce9fd; }

.splitter { flex: none; width: 6px; background: #e3e3e3; }
.home { flex: 1; min-width: 0; border-top: 1px solid #a0a0a0; border-left: 1px solid #a0a0a0; display: flex; flex-direction: column; padding-left: 12px; }
.heading { display: flex; gap: 18px; height: 39px; padding-top: 12px; }
h1 { display: flex; font-size: 18px; line-height: 26px; }
.machine { width: 163px; }
.filterbar { display: flex; align-items: center; height: 24px; border: solid #e9e9e9; border-width: 1px 0 1px 1px; border-bottom-color: #a0a0a0; background: linear-gradient(#fbfbfb, #f0f0f0); white-space: nowrap; }
.filter-label { width: 34px; padding-left: 7px; }
.combo { display: flex; align-items: center; height: 24px; background: #fff; }
.filter-box { width: 120px; }
.filter-box input { flex: 1; min-width: 0; height: 22px; padding: 0 4px; outline: 0; }
.go { gap: 4px; margin-left: 5px; color: #858585; }
.go-icon { width: 14px; height: 14px; }
.go + .caret { margin-left: 5px; }
.show { gap: 3px; margin-left: 2px; }
.group-bar { margin: 0 5px 0 7px; }
.group-label { width: 57px; }
.group-box { position: relative; width: 115px; }
.group-box select { width: 100%; height: 22px; padding-left: 4px; appearance: none; outline: 0; }
.arrow { position: absolute; right: 4px; width: 5px; height: 3px; pointer-events: none; }
.view { margin-left: 3px; }
.view-caret { width: 8px; }

.areas { flex: 1; border-left: 1px solid #e9e9e9; }
.area { padding-bottom: 11px; }
.area:last-child { padding-bottom: 0; }
.area-head { display: flex; align-items: center; height: 19px; padding-left: 12px; margin-bottom: 4px; color: #1f2f9c; }
.rule { flex: 1; height: 1px; margin-left: 4px; background: #dfe8f2; }
.fold { justify-content: center; width: 16px; height: 19px; margin-left: 4px; }
.fold svg { width: 8px; height: 5px; fill: none; stroke: #222; stroke-width: 1.500; }
.features { display: grid; grid-template-columns: repeat(auto-fill, 74px); gap: 10px 1px; padding-right: 30px; }
.features li { position: relative; height: 65px; }
.feature { display: flex; flex-direction: column; align-items: center; gap: 3px; width: 100%; }
.caption { display: flex; flex-direction: column; align-items: center; white-space: nowrap; }
.marked::after { content: ""; position: absolute; inset: -11px -3px -8px -1px; border: 5px solid #ed1c24; pointer-events: none; }
</style>
